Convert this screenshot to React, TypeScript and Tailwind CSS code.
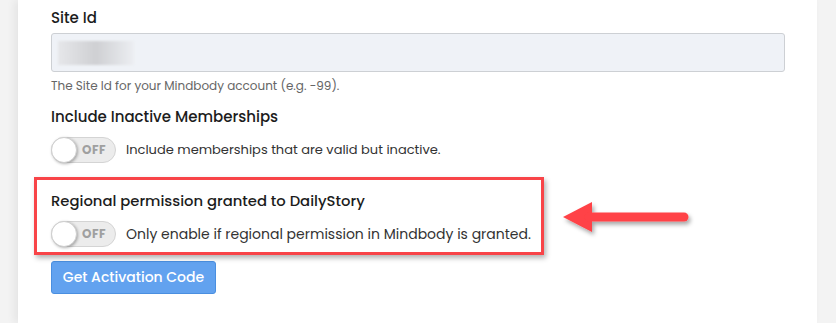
import React from 'react'

const Toggle = () => {
    return (
        <div className="relative flex items-center w-[65px] h-[26px] rounded-full border border-[#d4d4d4] bg-[#ececec] shrink-0">
            <div className="absolute left-[-1px] top-[-1px] w-[26px] h-[26px] rounded-full bg-white border border-[#cfcfcf] shadow-[1px_1px_3px_rgba(0,0,0,0.3)]"></div>
            <span className="ml-[30px] text-[12px] font-bold text-[#a0a0a0] tracking-[0.5px]">OFF</span>
        </div>
    )
}

const Arrow = () => {
    return (
        <svg width="140" height="44" viewBox="0 0 140 44" className="absolute left-[522px] top-[17px]">
            <defs>
                <filter id="sh" x="-20%" y="-40%" width="140%" height="180%">
                    <feDropShadow dx="2" dy="3" stdDeviation="2" floodColor="#000" floodOpacity="0.35" />
                </filter>
            </defs>
            <g filter="url(#sh)">
                <path d="M4 20 L33 5 L33 35 Z" fill="#ff4246" />
                <line x1="30" y1="20" x2="125" y2="20" stroke="#ff4246" strokeWidth="9" strokeLinecap="round" />
            </g>
        </svg>
    )
}

const App = () => {
    return (
        <div className="w-[836px] h-[323px] bg-[#f3f3f3] overflow-hidden" style={{ fontFamily: 'Poppins, Inter, "Noto Sans", sans-serif' }}>
            <div className="ml-[18px] w-[799px] h-full bg-white pl-[33px] pr-[32px] text-[#222] shadow-[-4px_0_8px_rgba(0,0,0,0.06)]">
                <div className="pt-[7px] text-[15px] font-medium leading-[22px] text-[#1c1c1c]">Site Id</div>
                <div className="mt-[4px] h-[39px] rounded-[3px] border border-[#cdd0d4] bg-[#eff2f7] flex items-center pl-[6px]">
                    <div className="w-[76px] h-[24px] bg-gradient-to-r from-[#e6e7ea] via-[#cfd0d3] to-[#eceef2] blur-[1px]"></div>
                </div>
                <div className="mt-[6px] text-[12px] leading-[16px] text-[#666]">The Site Id for your Mindbody account (e.g. -99).</div>
                <div className="mt-[12px] text-[15px] font-medium leading-[22px] text-[#1c1c1c]">Include Inactive Memberships</div>
                <div className="mt-[9px] flex items-center gap-[10px]">
                    <Toggle />
                    <span className="text-[13px] text-[#333]">Include memberships that are valid but inactive.</span>
                </div>
                <div className="relative mt-[14px] ml-[-17px] w-[510px] border-[3px] border-[#f84448] pl-[14px] pt-[10px] pb-[5px] shadow-[2px_3px_5px_rgba(0,0,0,0.3)]">
                    <div className="text-[14.8px] font-medium leading-[22px] text-[#1c1c1c]">Regional permission granted to DailyStory</div>
                    <div className="mt-[9px] flex items-center gap-[10px]">
                        <Toggle />
                        <span className="text-[14px] text-[#333]">Only enable if regional permission in Mindbody is granted.</span>
                    </div>
                    <Arrow />
                </div>
                <button className="mt-[6px] h-[33px] w-[165px] rounded-[3px] border border-[#4a8fe0] bg-[#62a2ef] text-[14px] font-medium text-white">Get Activation Code</button>
            </div>
        </div>
    )
}

export default App
